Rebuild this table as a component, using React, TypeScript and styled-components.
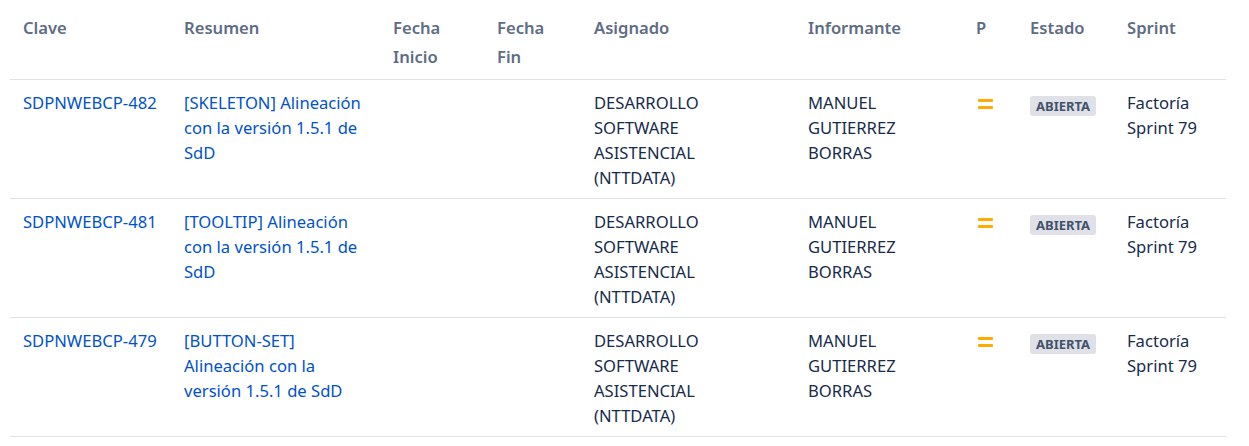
import React from "react";
import styled, { createGlobalStyle } from "styled-components";

const Global = createGlobalStyle`
  html, body { margin: 0; padding: 0; background: #ffffff; }
  body { font-family: "Noto Sans", "Open Sans", sans-serif; }
  *, *::before, *::after { box-sizing: border-box; }
`;

const Wrap = styled.div`
  padding: 0 23px 0 10px;
`;

const Table = styled.table`
  width: 1216px;
  border-collapse: collapse;
  table-layout: fixed;
  font-size: 16.6px;
`;

const Th = styled.th<{ $w: number }>`
  width: ${(p) => p.$w}px;
  text-align: left;
  vertical-align: top;
  font-weight: 600;
  color: #5e6c84;
  line-height: 29px;
  padding: 13px 10px 8px 13px;
  border-bottom: 1px solid #dfe1e6;
`;

const Tr = styled.tr`
  border-bottom: 1px solid #dfe1e6;
`;

const Td = styled.td<{ $pr?: number }>`
  vertical-align: top;
  color: #172b4d;
  line-height: 25px;
  padding: 10px ${(p) => p.$pr ?? 10}px 8px 13px;
`;

const Link = styled.a`
  color: #0052cc;
  text-decoration: none;
`;

const Lozenge = styled.span`
  display: inline-block;
  margin-top: 6px;
  padding: 0 6px;
  height: 20px;
  line-height: 20px;
  border-radius: 3px;
  background: #dfe1e6;
  color: #42526e;
  font-size: 13px;
  font-weight: 700;
  text-transform: uppercase;
`;

const PriorityIcon = styled.svg`
  display: block;
  margin: 7px 0 0 2px;
`;

const Medium = () => (
  <PriorityIcon width="16" height="16" viewBox="0 0 16 16">
    <rect x="0" y="2" width="15" height="3" rx="1" fill="#ffab00" />
    <rect x="0" y="9" width="15" height="3" rx="1" fill="#ffab00" />
  </PriorityIcon>
);

const cols: [string, number][] = [
  ["Clave", 161],
  ["Resumen", 209],
  ["Fecha Inicio", 104],
  ["Fecha Fin", 97],
  ["Asignado", 214],
  ["Informante", 168],
  ["P", 54],
  ["Estado", 97],
  ["Sprint", 112],
];

const rows = [
  { key: "SDPNWEBCP-482", summary: "[SKELETON] Alineación con la versión 1.5.1 de SdD" },
  { key: "SDPNWEBCP-481", summary: "[TOOLTIP] Alineación con la versión 1.5.1 de SdD" },
  { key: "SDPNWEBCP-479", summary: "[BUTTON-SET] Alineación con la versión 1.5.1 de SdD" },
];

export default function App() {
  return (
    <>
      <Global />
      <Wrap>
        <Table>
          <thead>
            <tr>
              {cols.map(([n, w]) => (
                <Th key={n} $w={w}>{n}</Th>
              ))}
            </tr>
          </thead>
          <tbody>
            {rows.map((r) => (
              <Tr key={r.key}>
                <Td><Link href="#">{r.key}</Link></Td>
                <Td><Link href="#">{r.summary}</Link></Td>
                <Td></Td>
                <Td></Td>
                <Td $pr={40}>DESARROLLO SOFTWARE ASISTENCIAL (NTTDATA)</Td>
                <Td>MANUEL GUTIERREZ BORRAS</Td>
                <Td><Medium /></Td>
                <Td><Lozenge>Abierta</Lozenge></Td>
                <Td>Factoría Sprint 79</Td>
              </Tr>
            ))}
          </tbody>
        </Table>
      </Wrap>
    </>
  );
}
